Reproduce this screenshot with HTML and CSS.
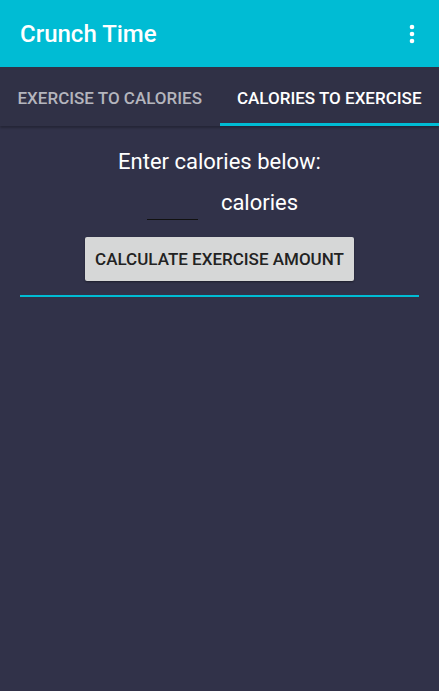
FILE: index.html
```html
<!DOCTYPE html>
<html>
<head>
<meta charset="utf-8">
<link rel="stylesheet" href="styles.css">
</head>
<body>
<header class="appbar">
  <div class="title">Crunch Time</div>
  <svg class="menu" width="6" height="20" viewBox="0 0 6 20">
    <circle cx="3" cy="3" r="2.3" fill="#fff"/>
    <circle cx="3" cy="10" r="2.3" fill="#fff"/>
    <circle cx="3" cy="17" r="2.3" fill="#fff"/>
  </svg>
</header>
<nav class="tabs">
  <div class="tab">EXERCISE TO CALORIES</div>
  <div class="tab active">CALORIES TO EXERCISE</div>
</nav>
<main class="content">
  <div class="prompt">Enter calories below:</div>
  <div class="inputrow">
    <div class="field"></div>
    <div class="unit">calories</div>
  </div>
  <button class="calc">CALCULATE EXERCISE AMOUNT</button>
  <div class="divider"></div>
</main>
</body>
</html>
```
FILE: styles.css
```css
html, body {
  margin: 0;
  padding: 0;
  height: 100%;
}
body {
  background: #313249;
  font-family: Roboto, "Noto Sans", sans-serif;
  color: #fff;
}
.appbar {
  height: 67px;
  background: #00bcd4;
  display: flex;
  align-items: center;
  justify-content: space-between;
  padding: 0 24px 0 20px;
  box-sizing: border-box;
}
.title {
  font-size: 24px;
  font-weight: 500;
}
.menu {
  display: block;
}
.tabs {
  display: flex;
  height: 59px;
  background: #303146;
  box-shadow: 0 2px 2px rgba(0,0,0,0.25);
}
.tab {
  flex: 1;
  display: flex;
  align-items: center;
  justify-content: center;
  font-size: 17px;
  font-weight: 500;
  color: #b4b5bd;
  box-sizing: border-box;
  padding-top: 3px;
}
.tab.active {
  color: #fff;
  border-bottom: 3px solid #00bcd4;
  padding-top: 6px;
}
.content {
  display: flex;
  flex-direction: column;
  align-items: center;
  padding: 21px 20px 0;
}
.prompt {
  font-size: 22px;
  line-height: 30px;
}
.inputrow {
  display: flex;
  align-items: flex-end;
  margin-top: 12px;
  margin-left: 6px;
}
.field {
  width: 51px;
  height: 1px;
  background: #111;
  margin-bottom: 2px;
  margin-right: 23px;
}
.unit {
  font-size: 22px;
  line-height: 28px;
  margin-bottom: 5px;
}
.calc {
  margin-top: 15px;
  width: 269px;
  height: 44px;
  background: #d6d7d7;
  border: none;
  border-radius: 2px;
  box-shadow: 0 1px 2px rgba(0,0,0,0.4);
  font-family: Roboto, "Noto Sans", sans-serif;
  font-size: 17px;
  font-weight: 500;
  color: #222;
  padding: 0;
}
.divider {
  align-self: stretch;
  height: 2px;
  background: #00bcd4;
  margin-top: 14px;
}
```
